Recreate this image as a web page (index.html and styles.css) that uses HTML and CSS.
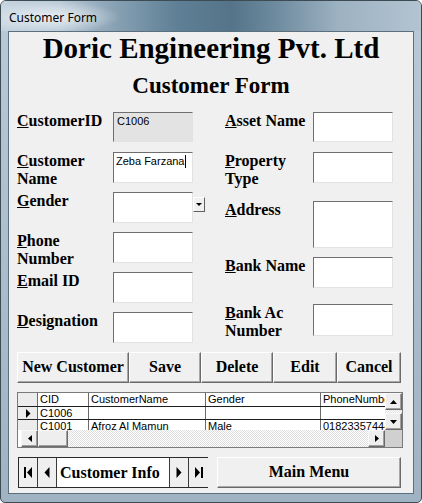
FILE: index.html
```html
<!DOCTYPE html>
<html>
<head>
<meta charset="utf-8">
<link rel="stylesheet" href="styles.css">
</head>
<body>
<div class="window">
  <div class="titlebar"><span class="title">Customer Form</span></div>
  <div class="frame">
    <div class="client">
      <h1 class="h1">Doric Engineering Pvt. Ltd</h1>
      <h2 class="h2">Customer Form</h2>
      <div class="body">
        <div class="form">
          <div class="col col-left">
            <div class="row"><div class="lbl"><u>C</u>ustomerID</div><div class="box box-disabled">C1006</div></div>
            <div class="row"><div class="lbl"><u>C</u>ustomer<br>Name</div><div class="box">Zeba Farzana<span class="caret"></span></div></div>
            <div class="row"><div class="lbl"><u>G</u>ender</div><div class="box"></div>
              <div class="dd"><svg width="6" height="4" viewBox="0 0 6 4"><path d="M0 0H6L3 3Z" fill="#000"/></svg></div></div>
            <div class="row"><div class="lbl"><u>P</u>hone<br>Number</div><div class="box"></div></div>
            <div class="row"><div class="lbl"><u>E</u>mail ID</div><div class="box"></div></div>
            <div class="row"><div class="lbl"><u>D</u>esignation</div><div class="box"></div></div>
          </div>
          <div class="col col-right">
            <div class="row r1"><div class="lbl lbl-r"><u>A</u>sset Name</div><div class="box h30"></div></div>
            <div class="row r2"><div class="lbl lbl-r"><u>P</u>roperty<br>Type</div><div class="box"></div></div>
            <div class="row r3"><div class="lbl lbl-r"><u>A</u>ddress</div><div class="box h47"></div></div>
            <div class="row r4"><div class="lbl lbl-r"><u>B</u>ank Name</div><div class="box"></div></div>
            <div class="row r5"><div class="lbl lbl-r"><u>B</u>ank Ac<br>Number</div><div class="box h32"></div></div>
          </div>
        </div>
        <div class="buttons">
          <div class="btn w112">New Customer</div>
          <div class="btn w72">Save</div>
          <div class="btn w72">Delete</div>
          <div class="btn w64">Edit</div>
          <div class="btn w64">Cancel</div>
        </div>
        <div class="sheet">
          <div class="sheet-main">
            <div class="grid">
              <div class="tr th">
                <div class="td sel"></div>
                <div class="td c1">CID</div>
                <div class="td c2">CustomerName</div>
                <div class="td c3">Gender</div>
                <div class="td c4">PhoneNumber</div>
              </div>
              <div class="tr">
                <div class="td sel"><svg width="6" height="9" viewBox="0 0 6 9"><path d="M1 0V9L5.5 4.5Z" fill="#000"/></svg></div>
                <div class="td c1">C1006</div>
                <div class="td c2"></div>
                <div class="td c3"></div>
                <div class="td c4"></div>
              </div>
              <div class="tr">
                <div class="td sel"></div>
                <div class="td c1">C1001</div>
                <div class="td c2">Afroz Al Mamun</div>
                <div class="td c3">Male</div>
                <div class="td c4">01823357444</div>
              </div>
            </div>
            <div class="vscroll">
              <div class="sb-btn sq"><svg width="7" height="4" viewBox="0 0 7 4"><path d="M0 4H7L3.5 0Z" fill="#000"/></svg></div>
              <div class="track"></div>
              <div class="sb-btn sq"><svg width="7" height="4" viewBox="0 0 7 4"><path d="M0 0H7L3.5 4Z" fill="#000"/></svg></div>
            </div>
          </div>
          <div class="hscroll">
            <div class="sb-btn sq left"><svg width="4" height="7" viewBox="0 0 4 7"><path d="M4 0V7L0 3.5Z" fill="#000"/></svg></div>
            <div class="sb-btn thumb"></div>
            <div class="track"></div>
            <div class="sb-btn sq"><svg width="4" height="7" viewBox="0 0 4 7"><path d="M0 0V7L4 3.5Z" fill="#000"/></svg></div>
            <div class="corner"></div>
          </div>
        </div>
        <div class="bottom">
          <div class="nav">
            <div class="nbtn"><svg width="9" height="11" viewBox="0 0 9 11"><rect x="0" y="0" width="2" height="11" fill="#000"/><path d="M8 0V11L3 5.5Z" fill="#000"/></svg></div>
            <div class="nbtn"><svg width="6" height="11" viewBox="0 0 6 11"><path d="M5.5 0V11L0.5 5.5Z" fill="#000"/></svg></div>
            <div class="ntext">Customer Info</div>
            <div class="nbtn"><svg width="6" height="11" viewBox="0 0 6 11"><path d="M0.5 0V11L5.5 5.5Z" fill="#000"/></svg></div>
            <div class="nbtn"><svg width="9" height="11" viewBox="0 0 9 11"><path d="M1 0V11L6 5.5Z" fill="#000"/><rect x="7" y="0" width="2" height="11" fill="#000"/></svg></div>
          </div>
          <div class="btn mainmenu">Main Menu</div>
        </div>
      </div>
    </div>
  </div>
</div>
</body>
</html>
```
FILE: styles.css
```css
* { box-sizing: border-box; }
html, body { margin: 0; padding: 0; background: #fff; }
.window {
  width: 422px; height: 503px;
  border: 1px solid #3d4b55;
  border-radius: 6px 6px 5px 5px;
  background: linear-gradient(180deg, #b9cad7 0%, #a9bccb 60%, #9fb3c3 100%);
  display: flex; flex-direction: column;
  overflow: hidden;
}
.titlebar {
  height: 30px; flex: none;
  background:
    radial-gradient(ellipse 70px 16px at 50px 16px, rgba(235,241,246,0.95), rgba(235,241,246,0) 100%),
    linear-gradient(90deg, #c6d4df 0%, #b9c9d6 14%, #8ba4b6 26%, #5e7f95 42%, #557489 55%, #6f8ca0 66%, #9cb1c1 80%, #b3c4d1 100%);
  padding: 7px 0 0 8px;
}
.title {
  font-family: "Noto Sans", "Open Sans", sans-serif;
  font-size: 12px; line-height: 16px; color: #000;
}
.frame { flex: 1; padding: 0 7px 8px 7px; display: flex; }
.client {
  width: 406px; height: 463px;
  border: 1px solid #5c6f7e;
  background: #f0f0f0;
  font-family: "Liberation Serif", "Times New Roman", serif;
  color: #000;
}
.h1 {
  margin: 0; text-align: center;
  font-size: 29px; line-height: 33px; font-weight: bold;
}
.h2 {
  margin: 8px 0 0; text-align: center;
  font-size: 23px; line-height: 26px; font-weight: bold;
}
.body { padding-left: 8px; margin-top: 13px; }
.form { display: flex; height: 240px; }
.col { display: flex; flex-direction: column; }
.col-left { width: 208px; }
.row { display: flex; align-items: flex-start; height: 40px; flex: none; }
.r1 { height: 31px; }
.r2 { height: 31px; margin-top: 9px; }
.r3 { height: 47px; margin-top: 18px; }
.r4 { height: 31px; margin-top: 9px; }
.r5 { height: 32px; margin-top: 16px; }
.lbl {
  width: 96px; flex: none;
  font-size: 16px; line-height: 18px; font-weight: bold;
}
.lbl-r { width: 88px; }
.box {
  width: 80px; height: 31px; flex: none;
  background: #fff;
  border: 1px solid;
  border-color: #6e6e6e #e2e2e2 #e2e2e2 #6e6e6e;
  font-family: "Liberation Sans", Arial, sans-serif;
  font-size: 11px; line-height: 13px;
  padding: 2px 2px 0 2px;
  display: flex; align-items: flex-start;
}
.h30 { height: 30px; }
.h32 { height: 32px; }
.h47 { height: 47px; }
.box-disabled { background: #e3e3e3; padding-left: 3px; height: 30px; }
.caret { display: inline-block; width: 1px; height: 13px; background: #000; margin-left: 1px; }
.dd {
  width: 12px; height: 15px; margin-top: 5px; flex: none;
  background: #f0f0f0;
  border: 1px solid; border-color: #fff #606060 #606060 #fff;
  display: flex; align-items: center; justify-content: center;
}
.buttons { display: flex; height: 31px; }
.btn {
  height: 31px;
  border: 1px solid;
  border-color: #ffffff #6a6a6a #6a6a6a #ffffff;
  box-shadow: inset -1px -1px 0 #a8a8a8;
  background: #f0f0f0;
  font-size: 16px; font-weight: bold; line-height: 28px;
  text-align: center;
}
.w112 { width: 112px; }
.w72 { width: 72px; }
.w64 { width: 64px; }
.sheet {
  margin-top: 9px;
  width: 386px; height: 56px;
  border: 1px solid #7a7a7a;
  background: #fff;
  display: flex; flex-direction: column;
}
.sheet-main { display: flex; height: 37px; }
.grid { width: 367px; height: 37px; overflow: hidden; }
.tr { display: flex; height: 13px; border-bottom: 1px solid #1e1e1e; }
.th { height: 14px; }
.td {
  height: 100%;
  border-right: 1px solid #6a6a6a;
  font-family: "Liberation Sans", Arial, sans-serif;
  font-size: 11px; line-height: 12px;
  padding-left: 2px;
  white-space: nowrap; overflow: hidden;
  color: #000;
}
.sel { width: 20px; background: #ececec; display: flex; align-items: center; justify-content: center; padding: 0; }
.c1 { width: 51px; }
.c2 { width: 117px; }
.c3 { width: 115px; }
.c4 { width: 64px; border-right: none; }
.vscroll { width: 17px; display: flex; flex-direction: column; }
.sb-btn {
  background: #eeeeee;
  border: 1px solid;
  border-color: #f8f8f8 #6a6a6a #6a6a6a #f8f8f8;
  box-shadow: inset -1px -1px 0 #a0a0a0;
  display: flex; align-items: center; justify-content: center;
  flex: none;
}
.sq { width: 17px; height: 17px; }
.track {
  flex: 1;
  background: repeating-conic-gradient(#ffffff 0 25%, #dedede 0 50%) 0 0 / 2px 2px;
}
.hscroll { display: flex; height: 17px; }
.left { margin-left: 3px; }
.thumb { width: 30px; height: 17px; }
.corner { width: 17px; height: 17px; background: #d0d0d0; }
.bottom { display: flex; margin-top: 9px; height: 31px; }
.nav {
  margin-left: 1px;
  width: 190px; height: 31px;
  border: 1px solid #2a2a2a;
  display: flex;
  background: #fff;
}
.nbtn {
  width: 19px; flex: none;
  background: #efefef;
  border-right: 1px solid #3a3a3a;
  display: flex; align-items: center; justify-content: center;
}
.ntext {
  width: 113px; flex: none;
  background: #fff;
  border-right: 1px solid #3a3a3a;
  font-size: 16px; font-weight: bold; line-height: 29px;
  padding-left: 3px;
  white-space: nowrap;
}
.nav .nbtn:last-child { border-right: none; }
.mainmenu { width: 184px; margin-left: 9px; }
```
